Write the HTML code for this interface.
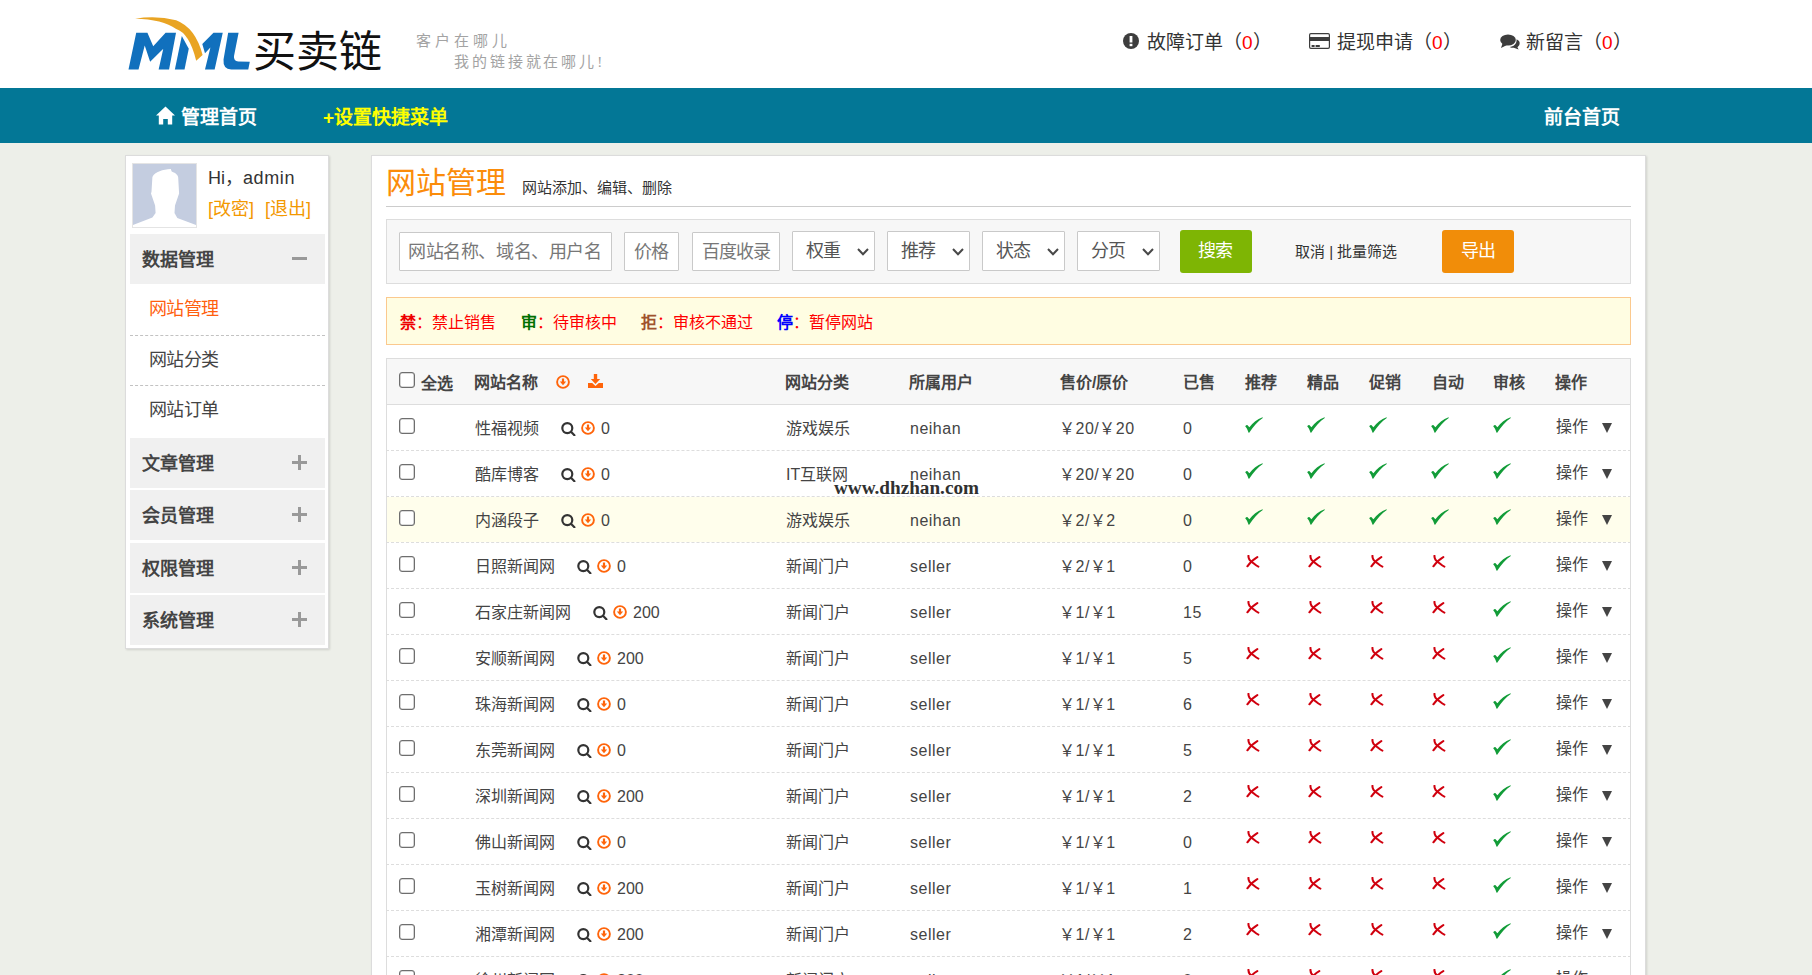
<!DOCTYPE html>
<html lang="zh-CN"><head><meta charset="utf-8"><title>网站管理</title>
<style>
*{box-sizing:border-box;margin:0;padding:0}
html,body{width:1812px;height:975px;overflow:hidden}
body{background:#edefe9;font-family:"Liberation Sans",sans-serif;color:#333;position:relative}
.a{position:absolute;white-space:nowrap}
#hdr{position:absolute;left:0;top:0;width:1812px;height:88px;background:#fff}
#nav{position:absolute;left:0;top:88px;width:1812px;height:55px;background:#037796}
.navt{font-size:19px;font-weight:bold;color:#fff;line-height:20px}
.hitem{font-size:19px;color:#333;line-height:20px}
.red{color:#f00}
#side{position:absolute;left:125px;top:155px;width:204px;height:494px;background:#fff;border:1px solid #dcdcdc;box-shadow:1px 1px 2px rgba(0,0,0,.12)}
.mh{position:absolute;left:4px;width:195px;height:50px;background:#f0f0f0}
.mh span{position:absolute;left:12px;top:16px;font-size:18px;font-weight:bold;color:#444;line-height:20px}
.mh i{position:absolute;left:162px;top:17px;width:15px;height:15px}
.mh i:before{content:"";position:absolute;left:0;top:6px;width:15px;height:3px;background:#999}
.mh i.p:after{content:"";position:absolute;left:6px;top:0;width:3px;height:15px;background:#999}
.mi{position:absolute;left:4px;width:195px;height:50px;border-bottom:1px dashed #c2c2c2}
.mi span{position:absolute;left:19px;top:14px;font-size:18px;letter-spacing:-0.7px;color:#444;line-height:20px}
#main{position:absolute;left:371px;top:155px;width:1275px;height:840px;background:#fff;border:1px solid #dcdcdc;box-shadow:1px 1px 2px rgba(0,0,0,.12)}
#srch{position:absolute;left:386px;top:219px;width:1245px;height:65px;background:#f7f7f7;border:1px solid #dddddd}
.inp{position:absolute;top:232px;height:39px;background:#fff;border:1px solid #c9c9c9;border-radius:1px;font-size:18px;letter-spacing:-1px;white-space:nowrap;color:#777;line-height:20px}
.inp span{position:absolute;top:9px}
.sel{position:absolute;top:231px;height:40px;width:83px;background:#fff;border:1px solid #c9c9c9;border-radius:1px;font-size:18px;letter-spacing:-1px;color:#555;line-height:20px;white-space:nowrap}
.sel span{position:absolute;left:13px;top:9px}
.sel svg{position:absolute;left:64px;top:16px}
.btn{position:absolute;top:230px;width:72px;height:43px;border-radius:3px;color:#fff;font-size:18px;letter-spacing:-1px;white-space:nowrap;line-height:20px}
.btn span{position:absolute;left:18px;top:11px}
#legend{position:absolute;left:386px;top:297px;width:1245px;height:48px;background:#fffde2;border:1px solid #fbc98e;font-size:16px;line-height:18px;color:#f00}
#legend span{position:absolute;top:16px}
#legend b{font-weight:bold}
.co{font-style:normal;display:inline-block;width:16px;padding-left:1px;font-family:"Liberation Sans",sans-serif}
#thead{position:absolute;left:386px;top:358px;width:1245px;height:47px;background:#f7f7f7;border:1px solid #dddddd;font-size:16px;font-weight:bold;color:#444;line-height:18px}
#thead span{position:absolute;top:15px}
.tr{position:absolute;left:386px;width:1245px;height:46px;border-left:1px solid #ddd;border-right:1px solid #ddd;border-bottom:1px dashed #ddd;font-size:16px;line-height:18px;color:#444}
.trbg{position:absolute;left:0;top:0;right:0;bottom:0}
.td{position:absolute;top:15px;white-space:nowrap}
.lat{letter-spacing:0.5px}
.cb{position:absolute;width:16px;height:16px;border:1px solid #6e6e6e;border-radius:3px;background:#fff;box-shadow:inset 0 0 0 0.3px #6e6e6e}
.ic{display:inline-block;margin-left:22px;vertical-align:-2px}
.ic2{display:inline-block;margin-left:5px;vertical-align:-1px}
.cnt{font-style:normal;margin-left:6px}
.mk{position:absolute}
.mk svg{display:block}
.tri{position:absolute;left:1215px;top:18px;width:0;height:0;border-left:5.5px solid transparent;border-right:5.5px solid transparent;border-top:10px solid #444}
#wm{position:absolute;left:834px;top:477px;font-family:"Liberation Serif",serif;font-weight:bold;font-size:19.2px;color:#303030;line-height:22px}

</style></head><body>
<div id="hdr"></div>
<svg class="a" style="left:120px;top:10px" width="140" height="70" viewBox="0 0 1812 906">
<path fill="#1170bd" d="M110,770 L210,295 L355,295 L430,470 L590,295 L725,295 L635,770 L500,770 L560,500 L390,670 L320,460 L240,770 Z"/>
<path fill="#1170bd" d="M710,770 L800,335 L890,500 L835,770 Z"/>
<path fill="#1170bd" d="M1065,440 L1210,295 L1330,295 L1225,770 L1100,770 L1170,485 L1100,560 Z"/>
<path fill="#1170bd" d="M1400,295 L1535,295 L1475,600 Q1470,665 1530,668 L1680,670 L1660,770 L1440,770 Q1330,765 1340,640 Z"/>
<path fill="#e9a423" stroke="#fff" stroke-width="22" paint-order="stroke" d="M195,113 Q470,70 727,132 Q980,230 1069,584 L986,656 Q900,300 727,245 Q550,120 195,113 Z"/>
</svg>
<div class="a" style="left:253px;top:29px;font-family:'Liberation Serif',serif;font-size:43px;line-height:48px;color:#111">买卖链</div>
<div class="a" style="left:416px;top:32px;font-family:'Liberation Serif',serif;font-size:15px;line-height:18px;color:#a3a3a3;letter-spacing:4px">客户在哪儿</div>
<div class="a" style="left:454px;top:53px;font-family:'Liberation Serif',serif;font-size:15px;line-height:18px;color:#a3a3a3;letter-spacing:2.9px">我的链接就在哪儿!</div>

<svg class="a" style="left:1123px;top:33px" width="16" height="16" viewBox="0 0 16 16"><circle cx="8" cy="8" r="8" fill="#3d3d3d"/><rect x="6.6" y="3" width="2.8" height="6.5" fill="#fff"/><rect x="6.6" y="10.8" width="2.8" height="2.4" fill="#fff"/></svg>
<div class="a hitem" style="left:1147px;top:33px">故障订单（<span class="red">0</span>）</div>
<svg class="a" style="left:1309px;top:33px" width="21" height="16" viewBox="0 0 21 16"><rect x="0.6" y="0.6" width="19.8" height="14.8" rx="1.3" fill="none" stroke="#3d3d3d" stroke-width="1.2"/><rect x="0.6" y="4" width="19.8" height="4" fill="#3d3d3d"/><rect x="2.6" y="12" width="3" height="2" fill="#3d3d3d"/><rect x="6.6" y="12" width="4.2" height="2" fill="#3d3d3d"/></svg>
<div class="a hitem" style="left:1337px;top:33px">提现申请（<span class="red">0</span>）</div>
<svg class="a" style="left:1500px;top:34px" width="20" height="16" viewBox="0 0 20 16"><ellipse cx="8" cy="6" rx="7.8" ry="5.6" fill="#3d3d3d"/><path d="M2.5,9.5 L1,14 L7,11 Z" fill="#3d3d3d"/><path d="M16.6,5.2 C19,6.2 20,8 19.6,10 C19.2,11.8 18,12.8 17.4,13.2 L18.6,15.6 L13.8,13.8 C12.4,13.9 10.9,13.6 9.6,12.9 C13.5,12.6 16.9,10 16.6,5.2 Z" fill="#3d3d3d"/></svg>
<div class="a hitem" style="left:1526px;top:33px">新留言（<span class="red">0</span>）</div>

<div id="nav"></div>
<svg class="a" style="left:156px;top:106px" width="19" height="19" viewBox="0 0 19 19"><path d="M9.5,0.5 L19,9.6 L16.2,9.6 L16.2,18.6 L11.8,18.6 L11.8,13 L7.2,13 L7.2,18.6 L2.8,18.6 L2.8,9.6 L0,9.6 Z" fill="#fff"/></svg>
<div class="a navt" style="left:181px;top:108px">管理首页</div>
<div class="a navt" style="left:323px;top:108px;color:#ffff00">+设置快捷菜单</div>
<div class="a navt" style="left:1544px;top:108px">前台首页</div>

<div id="side">
  <div style="position:absolute;left:6px;top:7px;width:65px;height:65px;border:1px solid #e4e4e4;background:#fff">
    <svg width="63" height="63" viewBox="0 0 63 63" style="display:block"><rect width="63" height="63" fill="#c4cde0"/><path fill="#fff" d="M37.8,5.1 L38.7,7.4 C43,9 45.4,11.5 45.2,13.8 L46.1,29.5 L42,41.5 L41.5,48.9 L44.3,54 L63,60.9 L63,63 L0,63 L0,60.9 L19.4,53.5 L22.6,48.9 L22.1,41.5 L18,29.5 L18.5,27.7 L19.4,12.9 C22,8 30,5.5 37.8,5.1 Z"/></svg>
  </div>
  <div class="a" style="left:82px;top:12px;font-size:18px;line-height:20px;color:#333">Hi<span style="letter-spacing:0">，</span><span style="letter-spacing:0.6px">admin</span></div>
  <div class="a" style="left:82px;top:43px;font-size:18px;line-height:20px;color:#f39800">[改密]<span style="margin-left:11px">[退出]</span></div>
  <div class="mh" style="top:78px"><span>数据管理</span><i></i></div>
  <div class="mi" style="top:128px;height:52px"><span style="color:#ff5f0f;top:15px">网站管理</span></div>
  <div class="mi" style="top:180px"><span>网站分类</span></div>
  <div class="mi" style="top:230px;border-bottom:none"><span>网站订单</span></div>
  <div class="mh" style="top:282px"><span>文章管理</span><i class="p"></i></div>
  <div class="mh" style="top:334px"><span>会员管理</span><i class="p"></i></div>
  <div class="mh" style="top:387px"><span>权限管理</span><i class="p"></i></div>
  <div class="mh" style="top:439px"><span>系统管理</span><i class="p"></i></div>
</div>

<div id="main"></div>
<div class="a" style="left:386px;top:165px;font-size:30px;line-height:36px;color:#fb8c0a">网站管理</div>
<div class="a" style="left:522px;top:179px;font-size:15px;line-height:18px;color:#333">网站添加、编辑、删除</div>
<div class="a" style="left:386px;top:206px;width:1245px;height:1px;background:#cccccc"></div>

<div id="srch"></div>
<div class="inp" style="left:399px;width:213px;letter-spacing:-0.4px"><span style="left:8px">网站名称、域名、用户名</span></div>
<div class="inp" style="left:624px;width:55px"><span style="left:9px">价格</span></div>
<div class="inp" style="left:692px;width:88px"><span style="left:9px">百度收录</span></div>
<div class="sel" style="left:792px"><span>权重</span><svg width="12" height="8" viewBox="0 0 12 8"><path d="M1,1 L6,6.2 L11,1" stroke="#484848" stroke-width="2" fill="none"/></svg></div>
<div class="sel" style="left:887px"><span>推荐</span><svg width="12" height="8" viewBox="0 0 12 8"><path d="M1,1 L6,6.2 L11,1" stroke="#484848" stroke-width="2" fill="none"/></svg></div>
<div class="sel" style="left:982px"><span>状态</span><svg width="12" height="8" viewBox="0 0 12 8"><path d="M1,1 L6,6.2 L11,1" stroke="#484848" stroke-width="2" fill="none"/></svg></div>
<div class="sel" style="left:1077px"><span>分页</span><svg width="12" height="8" viewBox="0 0 12 8"><path d="M1,1 L6,6.2 L11,1" stroke="#484848" stroke-width="2" fill="none"/></svg></div>
<div class="btn" style="left:1180px;background:#7eb504"><span>搜索</span></div>
<div class="a" style="left:1295px;top:243px;font-size:15px;line-height:18px;color:#333">取消 | 批量筛选</div>
<div class="btn" style="left:1442px;background:#f18d09"><span style="left:19px">导出</span></div>

<div id="legend">
<span style="left:13px"><b style="color:#e00">禁</b>：禁止销售</span>
<span style="left:134px"><b style="color:#007000">审</b>：待审核中</span>
<span style="left:254px"><b style="color:#a0522d">拒</b>：审核不通过</span>
<span style="left:390px"><b style="color:#00f">停</b>：暂停网站</span>
</div>

<div id="thead">
<i class="cb" style="left:12px;top:13px"></i>
<span style="left:34px;top:16px">全选</span>
<span style="left:87px">网站名称</span>
<svg style="position:absolute;left:169px;top:16px" width="14" height="14" viewBox="0 0 14 14"><circle cx="7" cy="7" r="5.9" stroke="#ff640a" stroke-width="1.9" fill="none"/><path d="M5.9,3.4 H8.1 V6.6 H10.2 L7,10.2 L3.8,6.6 H5.9 Z" fill="#ff640a"/></svg>
<svg style="position:absolute;left:201px;top:15px" width="15" height="14" viewBox="0 0 16 14" preserveAspectRatio="none"><path d="M6.2,0 H9.8 V5 H13 L8,10 L3,5 H6.2 Z" fill="#ff640a"/><path d="M0,9 H4.5 L8,12 L11.5,9 H16 V14 H0 Z" fill="#ff640a"/></svg>
<span style="left:398px">网站分类</span>
<span style="left:522px">所属用户</span>
<span style="left:673px">售价/原价</span>
<span style="left:796px">已售</span>
<span style="left:858px">推荐</span>
<span style="left:920px">精品</span>
<span style="left:982px">促销</span>
<span style="left:1045px">自动</span>
<span style="left:1106px">审核</span>
<span style="left:1168px">操作</span>
</div>
<div class="tr" style="top:405px"><div class="trbg"></div><i class="cb" style="left:12px;top:13px"></i><span class="td nm" style="left:88px">性福视频<b class="ic"><svg width="15" height="14" viewBox="0 0 15 14"><circle cx="6.3" cy="6.1" r="5" stroke="#333" stroke-width="2.2" fill="none"/><path d="M10,9.8 L13.4,13.2" stroke="#333" stroke-width="2.2" stroke-linecap="round"/></svg></b><b class="ic2"><svg width="14" height="14" viewBox="0 0 14 14"><circle cx="7" cy="7" r="5.9" stroke="#ff640a" stroke-width="1.9" fill="none"/><path d="M5.9,3.4 H8.1 V6.6 H10.2 L7,10.2 L3.8,6.6 H5.9 Z" fill="#ff640a"/></svg></b><em class="cnt">0</em></span><span class="td" style="left:399px">游戏娱乐</span><span class="td lat" style="left:523px">neihan</span><span class="td lat" style="left:672px">￥20/￥20</span><span class="td lat" style="left:796px">0</span><span class="mk" style="left:858px;top:12px"><svg class="ck" width="18" height="16" viewBox="0 0 18 16"><path d="M0.2,9.3 C0.9,8.4 1.6,8 2.3,8.1 L4.4,10.2 C8,5.6 12,2.1 17.6,0.2 L17.8,0.9 C12.8,4 8.4,9.2 4.2,15.8 L3.6,15.8 C2.6,12.8 1.5,10.6 0.2,9.3 Z" fill="#129c38"/></svg></span><span class="mk" style="left:920px;top:12px"><svg class="ck" width="18" height="16" viewBox="0 0 18 16"><path d="M0.2,9.3 C0.9,8.4 1.6,8 2.3,8.1 L4.4,10.2 C8,5.6 12,2.1 17.6,0.2 L17.8,0.9 C12.8,4 8.4,9.2 4.2,15.8 L3.6,15.8 C2.6,12.8 1.5,10.6 0.2,9.3 Z" fill="#129c38"/></svg></span><span class="mk" style="left:982px;top:12px"><svg class="ck" width="18" height="16" viewBox="0 0 18 16"><path d="M0.2,9.3 C0.9,8.4 1.6,8 2.3,8.1 L4.4,10.2 C8,5.6 12,2.1 17.6,0.2 L17.8,0.9 C12.8,4 8.4,9.2 4.2,15.8 L3.6,15.8 C2.6,12.8 1.5,10.6 0.2,9.3 Z" fill="#129c38"/></svg></span><span class="mk" style="left:1044px;top:12px"><svg class="ck" width="18" height="16" viewBox="0 0 18 16"><path d="M0.2,9.3 C0.9,8.4 1.6,8 2.3,8.1 L4.4,10.2 C8,5.6 12,2.1 17.6,0.2 L17.8,0.9 C12.8,4 8.4,9.2 4.2,15.8 L3.6,15.8 C2.6,12.8 1.5,10.6 0.2,9.3 Z" fill="#129c38"/></svg></span><span class="mk" style="left:1106px;top:12px"><svg class="ck" width="18" height="16" viewBox="0 0 18 16"><path d="M0.2,9.3 C0.9,8.4 1.6,8 2.3,8.1 L4.4,10.2 C8,5.6 12,2.1 17.6,0.2 L17.8,0.9 C12.8,4 8.4,9.2 4.2,15.8 L3.6,15.8 C2.6,12.8 1.5,10.6 0.2,9.3 Z" fill="#129c38"/></svg></span><span class="td" style="left:1169px;top:13px">操作</span><span class="tri"></span></div>
<div class="tr" style="top:451px"><div class="trbg"></div><i class="cb" style="left:12px;top:13px"></i><span class="td nm" style="left:88px">酷库博客<b class="ic"><svg width="15" height="14" viewBox="0 0 15 14"><circle cx="6.3" cy="6.1" r="5" stroke="#333" stroke-width="2.2" fill="none"/><path d="M10,9.8 L13.4,13.2" stroke="#333" stroke-width="2.2" stroke-linecap="round"/></svg></b><b class="ic2"><svg width="14" height="14" viewBox="0 0 14 14"><circle cx="7" cy="7" r="5.9" stroke="#ff640a" stroke-width="1.9" fill="none"/><path d="M5.9,3.4 H8.1 V6.6 H10.2 L7,10.2 L3.8,6.6 H5.9 Z" fill="#ff640a"/></svg></b><em class="cnt">0</em></span><span class="td" style="left:399px">IT互联网</span><span class="td lat" style="left:523px">neihan</span><span class="td lat" style="left:672px">￥20/￥20</span><span class="td lat" style="left:796px">0</span><span class="mk" style="left:858px;top:12px"><svg class="ck" width="18" height="16" viewBox="0 0 18 16"><path d="M0.2,9.3 C0.9,8.4 1.6,8 2.3,8.1 L4.4,10.2 C8,5.6 12,2.1 17.6,0.2 L17.8,0.9 C12.8,4 8.4,9.2 4.2,15.8 L3.6,15.8 C2.6,12.8 1.5,10.6 0.2,9.3 Z" fill="#129c38"/></svg></span><span class="mk" style="left:920px;top:12px"><svg class="ck" width="18" height="16" viewBox="0 0 18 16"><path d="M0.2,9.3 C0.9,8.4 1.6,8 2.3,8.1 L4.4,10.2 C8,5.6 12,2.1 17.6,0.2 L17.8,0.9 C12.8,4 8.4,9.2 4.2,15.8 L3.6,15.8 C2.6,12.8 1.5,10.6 0.2,9.3 Z" fill="#129c38"/></svg></span><span class="mk" style="left:982px;top:12px"><svg class="ck" width="18" height="16" viewBox="0 0 18 16"><path d="M0.2,9.3 C0.9,8.4 1.6,8 2.3,8.1 L4.4,10.2 C8,5.6 12,2.1 17.6,0.2 L17.8,0.9 C12.8,4 8.4,9.2 4.2,15.8 L3.6,15.8 C2.6,12.8 1.5,10.6 0.2,9.3 Z" fill="#129c38"/></svg></span><span class="mk" style="left:1044px;top:12px"><svg class="ck" width="18" height="16" viewBox="0 0 18 16"><path d="M0.2,9.3 C0.9,8.4 1.6,8 2.3,8.1 L4.4,10.2 C8,5.6 12,2.1 17.6,0.2 L17.8,0.9 C12.8,4 8.4,9.2 4.2,15.8 L3.6,15.8 C2.6,12.8 1.5,10.6 0.2,9.3 Z" fill="#129c38"/></svg></span><span class="mk" style="left:1106px;top:12px"><svg class="ck" width="18" height="16" viewBox="0 0 18 16"><path d="M0.2,9.3 C0.9,8.4 1.6,8 2.3,8.1 L4.4,10.2 C8,5.6 12,2.1 17.6,0.2 L17.8,0.9 C12.8,4 8.4,9.2 4.2,15.8 L3.6,15.8 C2.6,12.8 1.5,10.6 0.2,9.3 Z" fill="#129c38"/></svg></span><span class="td" style="left:1169px;top:13px">操作</span><span class="tri"></span></div>
<div class="tr" style="top:497px"><div class="trbg" style="background:#fffeec"></div><i class="cb" style="left:12px;top:13px"></i><span class="td nm" style="left:88px">内涵段子<b class="ic"><svg width="15" height="14" viewBox="0 0 15 14"><circle cx="6.3" cy="6.1" r="5" stroke="#333" stroke-width="2.2" fill="none"/><path d="M10,9.8 L13.4,13.2" stroke="#333" stroke-width="2.2" stroke-linecap="round"/></svg></b><b class="ic2"><svg width="14" height="14" viewBox="0 0 14 14"><circle cx="7" cy="7" r="5.9" stroke="#ff640a" stroke-width="1.9" fill="none"/><path d="M5.9,3.4 H8.1 V6.6 H10.2 L7,10.2 L3.8,6.6 H5.9 Z" fill="#ff640a"/></svg></b><em class="cnt">0</em></span><span class="td" style="left:399px">游戏娱乐</span><span class="td lat" style="left:523px">neihan</span><span class="td lat" style="left:672px">￥2/￥2</span><span class="td lat" style="left:796px">0</span><span class="mk" style="left:858px;top:12px"><svg class="ck" width="18" height="16" viewBox="0 0 18 16"><path d="M0.2,9.3 C0.9,8.4 1.6,8 2.3,8.1 L4.4,10.2 C8,5.6 12,2.1 17.6,0.2 L17.8,0.9 C12.8,4 8.4,9.2 4.2,15.8 L3.6,15.8 C2.6,12.8 1.5,10.6 0.2,9.3 Z" fill="#129c38"/></svg></span><span class="mk" style="left:920px;top:12px"><svg class="ck" width="18" height="16" viewBox="0 0 18 16"><path d="M0.2,9.3 C0.9,8.4 1.6,8 2.3,8.1 L4.4,10.2 C8,5.6 12,2.1 17.6,0.2 L17.8,0.9 C12.8,4 8.4,9.2 4.2,15.8 L3.6,15.8 C2.6,12.8 1.5,10.6 0.2,9.3 Z" fill="#129c38"/></svg></span><span class="mk" style="left:982px;top:12px"><svg class="ck" width="18" height="16" viewBox="0 0 18 16"><path d="M0.2,9.3 C0.9,8.4 1.6,8 2.3,8.1 L4.4,10.2 C8,5.6 12,2.1 17.6,0.2 L17.8,0.9 C12.8,4 8.4,9.2 4.2,15.8 L3.6,15.8 C2.6,12.8 1.5,10.6 0.2,9.3 Z" fill="#129c38"/></svg></span><span class="mk" style="left:1044px;top:12px"><svg class="ck" width="18" height="16" viewBox="0 0 18 16"><path d="M0.2,9.3 C0.9,8.4 1.6,8 2.3,8.1 L4.4,10.2 C8,5.6 12,2.1 17.6,0.2 L17.8,0.9 C12.8,4 8.4,9.2 4.2,15.8 L3.6,15.8 C2.6,12.8 1.5,10.6 0.2,9.3 Z" fill="#129c38"/></svg></span><span class="mk" style="left:1106px;top:12px"><svg class="ck" width="18" height="16" viewBox="0 0 18 16"><path d="M0.2,9.3 C0.9,8.4 1.6,8 2.3,8.1 L4.4,10.2 C8,5.6 12,2.1 17.6,0.2 L17.8,0.9 C12.8,4 8.4,9.2 4.2,15.8 L3.6,15.8 C2.6,12.8 1.5,10.6 0.2,9.3 Z" fill="#129c38"/></svg></span><span class="td" style="left:1169px;top:13px">操作</span><span class="tri"></span></div>
<div class="tr" style="top:543px"><div class="trbg"></div><i class="cb" style="left:12px;top:13px"></i><span class="td nm" style="left:88px">日照新闻网<b class="ic"><svg width="15" height="14" viewBox="0 0 15 14"><circle cx="6.3" cy="6.1" r="5" stroke="#333" stroke-width="2.2" fill="none"/><path d="M10,9.8 L13.4,13.2" stroke="#333" stroke-width="2.2" stroke-linecap="round"/></svg></b><b class="ic2"><svg width="14" height="14" viewBox="0 0 14 14"><circle cx="7" cy="7" r="5.9" stroke="#ff640a" stroke-width="1.9" fill="none"/><path d="M5.9,3.4 H8.1 V6.6 H10.2 L7,10.2 L3.8,6.6 H5.9 Z" fill="#ff640a"/></svg></b><em class="cnt">0</em></span><span class="td" style="left:399px">新闻门户</span><span class="td lat" style="left:523px">seller</span><span class="td lat" style="left:672px">￥2/￥1</span><span class="td lat" style="left:796px">0</span><span class="mk" style="left:859px;top:12px"><svg class="cx" width="15" height="14" viewBox="0 0 15 14"><g transform="translate(0.3,0.3) scale(0.9)"><path d="M2.4,0.6 C2.2,3.5 4.5,6.5 7,8 C9,9.6 11,11.6 13.4,12.6" stroke="#d0000e" stroke-width="2.3" fill="none" stroke-linecap="round"/><path d="M12.2,2 C8.5,4 4,8.5 1.2,12.2" stroke="#d0000e" stroke-width="2.3" fill="none" stroke-linecap="round"/></g></svg></span><span class="mk" style="left:921px;top:12px"><svg class="cx" width="15" height="14" viewBox="0 0 15 14"><g transform="translate(0.3,0.3) scale(0.9)"><path d="M2.4,0.6 C2.2,3.5 4.5,6.5 7,8 C9,9.6 11,11.6 13.4,12.6" stroke="#d0000e" stroke-width="2.3" fill="none" stroke-linecap="round"/><path d="M12.2,2 C8.5,4 4,8.5 1.2,12.2" stroke="#d0000e" stroke-width="2.3" fill="none" stroke-linecap="round"/></g></svg></span><span class="mk" style="left:983px;top:12px"><svg class="cx" width="15" height="14" viewBox="0 0 15 14"><g transform="translate(0.3,0.3) scale(0.9)"><path d="M2.4,0.6 C2.2,3.5 4.5,6.5 7,8 C9,9.6 11,11.6 13.4,12.6" stroke="#d0000e" stroke-width="2.3" fill="none" stroke-linecap="round"/><path d="M12.2,2 C8.5,4 4,8.5 1.2,12.2" stroke="#d0000e" stroke-width="2.3" fill="none" stroke-linecap="round"/></g></svg></span><span class="mk" style="left:1045px;top:12px"><svg class="cx" width="15" height="14" viewBox="0 0 15 14"><g transform="translate(0.3,0.3) scale(0.9)"><path d="M2.4,0.6 C2.2,3.5 4.5,6.5 7,8 C9,9.6 11,11.6 13.4,12.6" stroke="#d0000e" stroke-width="2.3" fill="none" stroke-linecap="round"/><path d="M12.2,2 C8.5,4 4,8.5 1.2,12.2" stroke="#d0000e" stroke-width="2.3" fill="none" stroke-linecap="round"/></g></svg></span><span class="mk" style="left:1106px;top:12px"><svg class="ck" width="18" height="16" viewBox="0 0 18 16"><path d="M0.2,9.3 C0.9,8.4 1.6,8 2.3,8.1 L4.4,10.2 C8,5.6 12,2.1 17.6,0.2 L17.8,0.9 C12.8,4 8.4,9.2 4.2,15.8 L3.6,15.8 C2.6,12.8 1.5,10.6 0.2,9.3 Z" fill="#129c38"/></svg></span><span class="td" style="left:1169px;top:13px">操作</span><span class="tri"></span></div>
<div class="tr" style="top:589px"><div class="trbg"></div><i class="cb" style="left:12px;top:13px"></i><span class="td nm" style="left:88px">石家庄新闻网<b class="ic"><svg width="15" height="14" viewBox="0 0 15 14"><circle cx="6.3" cy="6.1" r="5" stroke="#333" stroke-width="2.2" fill="none"/><path d="M10,9.8 L13.4,13.2" stroke="#333" stroke-width="2.2" stroke-linecap="round"/></svg></b><b class="ic2"><svg width="14" height="14" viewBox="0 0 14 14"><circle cx="7" cy="7" r="5.9" stroke="#ff640a" stroke-width="1.9" fill="none"/><path d="M5.9,3.4 H8.1 V6.6 H10.2 L7,10.2 L3.8,6.6 H5.9 Z" fill="#ff640a"/></svg></b><em class="cnt">200</em></span><span class="td" style="left:399px">新闻门户</span><span class="td lat" style="left:523px">seller</span><span class="td lat" style="left:672px">￥1/￥1</span><span class="td lat" style="left:796px">15</span><span class="mk" style="left:859px;top:12px"><svg class="cx" width="15" height="14" viewBox="0 0 15 14"><g transform="translate(0.3,0.3) scale(0.9)"><path d="M2.4,0.6 C2.2,3.5 4.5,6.5 7,8 C9,9.6 11,11.6 13.4,12.6" stroke="#d0000e" stroke-width="2.3" fill="none" stroke-linecap="round"/><path d="M12.2,2 C8.5,4 4,8.5 1.2,12.2" stroke="#d0000e" stroke-width="2.3" fill="none" stroke-linecap="round"/></g></svg></span><span class="mk" style="left:921px;top:12px"><svg class="cx" width="15" height="14" viewBox="0 0 15 14"><g transform="translate(0.3,0.3) scale(0.9)"><path d="M2.4,0.6 C2.2,3.5 4.5,6.5 7,8 C9,9.6 11,11.6 13.4,12.6" stroke="#d0000e" stroke-width="2.3" fill="none" stroke-linecap="round"/><path d="M12.2,2 C8.5,4 4,8.5 1.2,12.2" stroke="#d0000e" stroke-width="2.3" fill="none" stroke-linecap="round"/></g></svg></span><span class="mk" style="left:983px;top:12px"><svg class="cx" width="15" height="14" viewBox="0 0 15 14"><g transform="translate(0.3,0.3) scale(0.9)"><path d="M2.4,0.6 C2.2,3.5 4.5,6.5 7,8 C9,9.6 11,11.6 13.4,12.6" stroke="#d0000e" stroke-width="2.3" fill="none" stroke-linecap="round"/><path d="M12.2,2 C8.5,4 4,8.5 1.2,12.2" stroke="#d0000e" stroke-width="2.3" fill="none" stroke-linecap="round"/></g></svg></span><span class="mk" style="left:1045px;top:12px"><svg class="cx" width="15" height="14" viewBox="0 0 15 14"><g transform="translate(0.3,0.3) scale(0.9)"><path d="M2.4,0.6 C2.2,3.5 4.5,6.5 7,8 C9,9.6 11,11.6 13.4,12.6" stroke="#d0000e" stroke-width="2.3" fill="none" stroke-linecap="round"/><path d="M12.2,2 C8.5,4 4,8.5 1.2,12.2" stroke="#d0000e" stroke-width="2.3" fill="none" stroke-linecap="round"/></g></svg></span><span class="mk" style="left:1106px;top:12px"><svg class="ck" width="18" height="16" viewBox="0 0 18 16"><path d="M0.2,9.3 C0.9,8.4 1.6,8 2.3,8.1 L4.4,10.2 C8,5.6 12,2.1 17.6,0.2 L17.8,0.9 C12.8,4 8.4,9.2 4.2,15.8 L3.6,15.8 C2.6,12.8 1.5,10.6 0.2,9.3 Z" fill="#129c38"/></svg></span><span class="td" style="left:1169px;top:13px">操作</span><span class="tri"></span></div>
<div class="tr" style="top:635px"><div class="trbg"></div><i class="cb" style="left:12px;top:13px"></i><span class="td nm" style="left:88px">安顺新闻网<b class="ic"><svg width="15" height="14" viewBox="0 0 15 14"><circle cx="6.3" cy="6.1" r="5" stroke="#333" stroke-width="2.2" fill="none"/><path d="M10,9.8 L13.4,13.2" stroke="#333" stroke-width="2.2" stroke-linecap="round"/></svg></b><b class="ic2"><svg width="14" height="14" viewBox="0 0 14 14"><circle cx="7" cy="7" r="5.9" stroke="#ff640a" stroke-width="1.9" fill="none"/><path d="M5.9,3.4 H8.1 V6.6 H10.2 L7,10.2 L3.8,6.6 H5.9 Z" fill="#ff640a"/></svg></b><em class="cnt">200</em></span><span class="td" style="left:399px">新闻门户</span><span class="td lat" style="left:523px">seller</span><span class="td lat" style="left:672px">￥1/￥1</span><span class="td lat" style="left:796px">5</span><span class="mk" style="left:859px;top:12px"><svg class="cx" width="15" height="14" viewBox="0 0 15 14"><g transform="translate(0.3,0.3) scale(0.9)"><path d="M2.4,0.6 C2.2,3.5 4.5,6.5 7,8 C9,9.6 11,11.6 13.4,12.6" stroke="#d0000e" stroke-width="2.3" fill="none" stroke-linecap="round"/><path d="M12.2,2 C8.5,4 4,8.5 1.2,12.2" stroke="#d0000e" stroke-width="2.3" fill="none" stroke-linecap="round"/></g></svg></span><span class="mk" style="left:921px;top:12px"><svg class="cx" width="15" height="14" viewBox="0 0 15 14"><g transform="translate(0.3,0.3) scale(0.9)"><path d="M2.4,0.6 C2.2,3.5 4.5,6.5 7,8 C9,9.6 11,11.6 13.4,12.6" stroke="#d0000e" stroke-width="2.3" fill="none" stroke-linecap="round"/><path d="M12.2,2 C8.5,4 4,8.5 1.2,12.2" stroke="#d0000e" stroke-width="2.3" fill="none" stroke-linecap="round"/></g></svg></span><span class="mk" style="left:983px;top:12px"><svg class="cx" width="15" height="14" viewBox="0 0 15 14"><g transform="translate(0.3,0.3) scale(0.9)"><path d="M2.4,0.6 C2.2,3.5 4.5,6.5 7,8 C9,9.6 11,11.6 13.4,12.6" stroke="#d0000e" stroke-width="2.3" fill="none" stroke-linecap="round"/><path d="M12.2,2 C8.5,4 4,8.5 1.2,12.2" stroke="#d0000e" stroke-width="2.3" fill="none" stroke-linecap="round"/></g></svg></span><span class="mk" style="left:1045px;top:12px"><svg class="cx" width="15" height="14" viewBox="0 0 15 14"><g transform="translate(0.3,0.3) scale(0.9)"><path d="M2.4,0.6 C2.2,3.5 4.5,6.5 7,8 C9,9.6 11,11.6 13.4,12.6" stroke="#d0000e" stroke-width="2.3" fill="none" stroke-linecap="round"/><path d="M12.2,2 C8.5,4 4,8.5 1.2,12.2" stroke="#d0000e" stroke-width="2.3" fill="none" stroke-linecap="round"/></g></svg></span><span class="mk" style="left:1106px;top:12px"><svg class="ck" width="18" height="16" viewBox="0 0 18 16"><path d="M0.2,9.3 C0.9,8.4 1.6,8 2.3,8.1 L4.4,10.2 C8,5.6 12,2.1 17.6,0.2 L17.8,0.9 C12.8,4 8.4,9.2 4.2,15.8 L3.6,15.8 C2.6,12.8 1.5,10.6 0.2,9.3 Z" fill="#129c38"/></svg></span><span class="td" style="left:1169px;top:13px">操作</span><span class="tri"></span></div>
<div class="tr" style="top:681px"><div class="trbg"></div><i class="cb" style="left:12px;top:13px"></i><span class="td nm" style="left:88px">珠海新闻网<b class="ic"><svg width="15" height="14" viewBox="0 0 15 14"><circle cx="6.3" cy="6.1" r="5" stroke="#333" stroke-width="2.2" fill="none"/><path d="M10,9.8 L13.4,13.2" stroke="#333" stroke-width="2.2" stroke-linecap="round"/></svg></b><b class="ic2"><svg width="14" height="14" viewBox="0 0 14 14"><circle cx="7" cy="7" r="5.9" stroke="#ff640a" stroke-width="1.9" fill="none"/><path d="M5.9,3.4 H8.1 V6.6 H10.2 L7,10.2 L3.8,6.6 H5.9 Z" fill="#ff640a"/></svg></b><em class="cnt">0</em></span><span class="td" style="left:399px">新闻门户</span><span class="td lat" style="left:523px">seller</span><span class="td lat" style="left:672px">￥1/￥1</span><span class="td lat" style="left:796px">6</span><span class="mk" style="left:859px;top:12px"><svg class="cx" width="15" height="14" viewBox="0 0 15 14"><g transform="translate(0.3,0.3) scale(0.9)"><path d="M2.4,0.6 C2.2,3.5 4.5,6.5 7,8 C9,9.6 11,11.6 13.4,12.6" stroke="#d0000e" stroke-width="2.3" fill="none" stroke-linecap="round"/><path d="M12.2,2 C8.5,4 4,8.5 1.2,12.2" stroke="#d0000e" stroke-width="2.3" fill="none" stroke-linecap="round"/></g></svg></span><span class="mk" style="left:921px;top:12px"><svg class="cx" width="15" height="14" viewBox="0 0 15 14"><g transform="translate(0.3,0.3) scale(0.9)"><path d="M2.4,0.6 C2.2,3.5 4.5,6.5 7,8 C9,9.6 11,11.6 13.4,12.6" stroke="#d0000e" stroke-width="2.3" fill="none" stroke-linecap="round"/><path d="M12.2,2 C8.5,4 4,8.5 1.2,12.2" stroke="#d0000e" stroke-width="2.3" fill="none" stroke-linecap="round"/></g></svg></span><span class="mk" style="left:983px;top:12px"><svg class="cx" width="15" height="14" viewBox="0 0 15 14"><g transform="translate(0.3,0.3) scale(0.9)"><path d="M2.4,0.6 C2.2,3.5 4.5,6.5 7,8 C9,9.6 11,11.6 13.4,12.6" stroke="#d0000e" stroke-width="2.3" fill="none" stroke-linecap="round"/><path d="M12.2,2 C8.5,4 4,8.5 1.2,12.2" stroke="#d0000e" stroke-width="2.3" fill="none" stroke-linecap="round"/></g></svg></span><span class="mk" style="left:1045px;top:12px"><svg class="cx" width="15" height="14" viewBox="0 0 15 14"><g transform="translate(0.3,0.3) scale(0.9)"><path d="M2.4,0.6 C2.2,3.5 4.5,6.5 7,8 C9,9.6 11,11.6 13.4,12.6" stroke="#d0000e" stroke-width="2.3" fill="none" stroke-linecap="round"/><path d="M12.2,2 C8.5,4 4,8.5 1.2,12.2" stroke="#d0000e" stroke-width="2.3" fill="none" stroke-linecap="round"/></g></svg></span><span class="mk" style="left:1106px;top:12px"><svg class="ck" width="18" height="16" viewBox="0 0 18 16"><path d="M0.2,9.3 C0.9,8.4 1.6,8 2.3,8.1 L4.4,10.2 C8,5.6 12,2.1 17.6,0.2 L17.8,0.9 C12.8,4 8.4,9.2 4.2,15.8 L3.6,15.8 C2.6,12.8 1.5,10.6 0.2,9.3 Z" fill="#129c38"/></svg></span><span class="td" style="left:1169px;top:13px">操作</span><span class="tri"></span></div>
<div class="tr" style="top:727px"><div class="trbg"></div><i class="cb" style="left:12px;top:13px"></i><span class="td nm" style="left:88px">东莞新闻网<b class="ic"><svg width="15" height="14" viewBox="0 0 15 14"><circle cx="6.3" cy="6.1" r="5" stroke="#333" stroke-width="2.2" fill="none"/><path d="M10,9.8 L13.4,13.2" stroke="#333" stroke-width="2.2" stroke-linecap="round"/></svg></b><b class="ic2"><svg width="14" height="14" viewBox="0 0 14 14"><circle cx="7" cy="7" r="5.9" stroke="#ff640a" stroke-width="1.9" fill="none"/><path d="M5.9,3.4 H8.1 V6.6 H10.2 L7,10.2 L3.8,6.6 H5.9 Z" fill="#ff640a"/></svg></b><em class="cnt">0</em></span><span class="td" style="left:399px">新闻门户</span><span class="td lat" style="left:523px">seller</span><span class="td lat" style="left:672px">￥1/￥1</span><span class="td lat" style="left:796px">5</span><span class="mk" style="left:859px;top:12px"><svg class="cx" width="15" height="14" viewBox="0 0 15 14"><g transform="translate(0.3,0.3) scale(0.9)"><path d="M2.4,0.6 C2.2,3.5 4.5,6.5 7,8 C9,9.6 11,11.6 13.4,12.6" stroke="#d0000e" stroke-width="2.3" fill="none" stroke-linecap="round"/><path d="M12.2,2 C8.5,4 4,8.5 1.2,12.2" stroke="#d0000e" stroke-width="2.3" fill="none" stroke-linecap="round"/></g></svg></span><span class="mk" style="left:921px;top:12px"><svg class="cx" width="15" height="14" viewBox="0 0 15 14"><g transform="translate(0.3,0.3) scale(0.9)"><path d="M2.4,0.6 C2.2,3.5 4.5,6.5 7,8 C9,9.6 11,11.6 13.4,12.6" stroke="#d0000e" stroke-width="2.3" fill="none" stroke-linecap="round"/><path d="M12.2,2 C8.5,4 4,8.5 1.2,12.2" stroke="#d0000e" stroke-width="2.3" fill="none" stroke-linecap="round"/></g></svg></span><span class="mk" style="left:983px;top:12px"><svg class="cx" width="15" height="14" viewBox="0 0 15 14"><g transform="translate(0.3,0.3) scale(0.9)"><path d="M2.4,0.6 C2.2,3.5 4.5,6.5 7,8 C9,9.6 11,11.6 13.4,12.6" stroke="#d0000e" stroke-width="2.3" fill="none" stroke-linecap="round"/><path d="M12.2,2 C8.5,4 4,8.5 1.2,12.2" stroke="#d0000e" stroke-width="2.3" fill="none" stroke-linecap="round"/></g></svg></span><span class="mk" style="left:1045px;top:12px"><svg class="cx" width="15" height="14" viewBox="0 0 15 14"><g transform="translate(0.3,0.3) scale(0.9)"><path d="M2.4,0.6 C2.2,3.5 4.5,6.5 7,8 C9,9.6 11,11.6 13.4,12.6" stroke="#d0000e" stroke-width="2.3" fill="none" stroke-linecap="round"/><path d="M12.2,2 C8.5,4 4,8.5 1.2,12.2" stroke="#d0000e" stroke-width="2.3" fill="none" stroke-linecap="round"/></g></svg></span><span class="mk" style="left:1106px;top:12px"><svg class="ck" width="18" height="16" viewBox="0 0 18 16"><path d="M0.2,9.3 C0.9,8.4 1.6,8 2.3,8.1 L4.4,10.2 C8,5.6 12,2.1 17.6,0.2 L17.8,0.9 C12.8,4 8.4,9.2 4.2,15.8 L3.6,15.8 C2.6,12.8 1.5,10.6 0.2,9.3 Z" fill="#129c38"/></svg></span><span class="td" style="left:1169px;top:13px">操作</span><span class="tri"></span></div>
<div class="tr" style="top:773px"><div class="trbg"></div><i class="cb" style="left:12px;top:13px"></i><span class="td nm" style="left:88px">深圳新闻网<b class="ic"><svg width="15" height="14" viewBox="0 0 15 14"><circle cx="6.3" cy="6.1" r="5" stroke="#333" stroke-width="2.2" fill="none"/><path d="M10,9.8 L13.4,13.2" stroke="#333" stroke-width="2.2" stroke-linecap="round"/></svg></b><b class="ic2"><svg width="14" height="14" viewBox="0 0 14 14"><circle cx="7" cy="7" r="5.9" stroke="#ff640a" stroke-width="1.9" fill="none"/><path d="M5.9,3.4 H8.1 V6.6 H10.2 L7,10.2 L3.8,6.6 H5.9 Z" fill="#ff640a"/></svg></b><em class="cnt">200</em></span><span class="td" style="left:399px">新闻门户</span><span class="td lat" style="left:523px">seller</span><span class="td lat" style="left:672px">￥1/￥1</span><span class="td lat" style="left:796px">2</span><span class="mk" style="left:859px;top:12px"><svg class="cx" width="15" height="14" viewBox="0 0 15 14"><g transform="translate(0.3,0.3) scale(0.9)"><path d="M2.4,0.6 C2.2,3.5 4.5,6.5 7,8 C9,9.6 11,11.6 13.4,12.6" stroke="#d0000e" stroke-width="2.3" fill="none" stroke-linecap="round"/><path d="M12.2,2 C8.5,4 4,8.5 1.2,12.2" stroke="#d0000e" stroke-width="2.3" fill="none" stroke-linecap="round"/></g></svg></span><span class="mk" style="left:921px;top:12px"><svg class="cx" width="15" height="14" viewBox="0 0 15 14"><g transform="translate(0.3,0.3) scale(0.9)"><path d="M2.4,0.6 C2.2,3.5 4.5,6.5 7,8 C9,9.6 11,11.6 13.4,12.6" stroke="#d0000e" stroke-width="2.3" fill="none" stroke-linecap="round"/><path d="M12.2,2 C8.5,4 4,8.5 1.2,12.2" stroke="#d0000e" stroke-width="2.3" fill="none" stroke-linecap="round"/></g></svg></span><span class="mk" style="left:983px;top:12px"><svg class="cx" width="15" height="14" viewBox="0 0 15 14"><g transform="translate(0.3,0.3) scale(0.9)"><path d="M2.4,0.6 C2.2,3.5 4.5,6.5 7,8 C9,9.6 11,11.6 13.4,12.6" stroke="#d0000e" stroke-width="2.3" fill="none" stroke-linecap="round"/><path d="M12.2,2 C8.5,4 4,8.5 1.2,12.2" stroke="#d0000e" stroke-width="2.3" fill="none" stroke-linecap="round"/></g></svg></span><span class="mk" style="left:1045px;top:12px"><svg class="cx" width="15" height="14" viewBox="0 0 15 14"><g transform="translate(0.3,0.3) scale(0.9)"><path d="M2.4,0.6 C2.2,3.5 4.5,6.5 7,8 C9,9.6 11,11.6 13.4,12.6" stroke="#d0000e" stroke-width="2.3" fill="none" stroke-linecap="round"/><path d="M12.2,2 C8.5,4 4,8.5 1.2,12.2" stroke="#d0000e" stroke-width="2.3" fill="none" stroke-linecap="round"/></g></svg></span><span class="mk" style="left:1106px;top:12px"><svg class="ck" width="18" height="16" viewBox="0 0 18 16"><path d="M0.2,9.3 C0.9,8.4 1.6,8 2.3,8.1 L4.4,10.2 C8,5.6 12,2.1 17.6,0.2 L17.8,0.9 C12.8,4 8.4,9.2 4.2,15.8 L3.6,15.8 C2.6,12.8 1.5,10.6 0.2,9.3 Z" fill="#129c38"/></svg></span><span class="td" style="left:1169px;top:13px">操作</span><span class="tri"></span></div>
<div class="tr" style="top:819px"><div class="trbg"></div><i class="cb" style="left:12px;top:13px"></i><span class="td nm" style="left:88px">佛山新闻网<b class="ic"><svg width="15" height="14" viewBox="0 0 15 14"><circle cx="6.3" cy="6.1" r="5" stroke="#333" stroke-width="2.2" fill="none"/><path d="M10,9.8 L13.4,13.2" stroke="#333" stroke-width="2.2" stroke-linecap="round"/></svg></b><b class="ic2"><svg width="14" height="14" viewBox="0 0 14 14"><circle cx="7" cy="7" r="5.9" stroke="#ff640a" stroke-width="1.9" fill="none"/><path d="M5.9,3.4 H8.1 V6.6 H10.2 L7,10.2 L3.8,6.6 H5.9 Z" fill="#ff640a"/></svg></b><em class="cnt">0</em></span><span class="td" style="left:399px">新闻门户</span><span class="td lat" style="left:523px">seller</span><span class="td lat" style="left:672px">￥1/￥1</span><span class="td lat" style="left:796px">0</span><span class="mk" style="left:859px;top:12px"><svg class="cx" width="15" height="14" viewBox="0 0 15 14"><g transform="translate(0.3,0.3) scale(0.9)"><path d="M2.4,0.6 C2.2,3.5 4.5,6.5 7,8 C9,9.6 11,11.6 13.4,12.6" stroke="#d0000e" stroke-width="2.3" fill="none" stroke-linecap="round"/><path d="M12.2,2 C8.5,4 4,8.5 1.2,12.2" stroke="#d0000e" stroke-width="2.3" fill="none" stroke-linecap="round"/></g></svg></span><span class="mk" style="left:921px;top:12px"><svg class="cx" width="15" height="14" viewBox="0 0 15 14"><g transform="translate(0.3,0.3) scale(0.9)"><path d="M2.4,0.6 C2.2,3.5 4.5,6.5 7,8 C9,9.6 11,11.6 13.4,12.6" stroke="#d0000e" stroke-width="2.3" fill="none" stroke-linecap="round"/><path d="M12.2,2 C8.5,4 4,8.5 1.2,12.2" stroke="#d0000e" stroke-width="2.3" fill="none" stroke-linecap="round"/></g></svg></span><span class="mk" style="left:983px;top:12px"><svg class="cx" width="15" height="14" viewBox="0 0 15 14"><g transform="translate(0.3,0.3) scale(0.9)"><path d="M2.4,0.6 C2.2,3.5 4.5,6.5 7,8 C9,9.6 11,11.6 13.4,12.6" stroke="#d0000e" stroke-width="2.3" fill="none" stroke-linecap="round"/><path d="M12.2,2 C8.5,4 4,8.5 1.2,12.2" stroke="#d0000e" stroke-width="2.3" fill="none" stroke-linecap="round"/></g></svg></span><span class="mk" style="left:1045px;top:12px"><svg class="cx" width="15" height="14" viewBox="0 0 15 14"><g transform="translate(0.3,0.3) scale(0.9)"><path d="M2.4,0.6 C2.2,3.5 4.5,6.5 7,8 C9,9.6 11,11.6 13.4,12.6" stroke="#d0000e" stroke-width="2.3" fill="none" stroke-linecap="round"/><path d="M12.2,2 C8.5,4 4,8.5 1.2,12.2" stroke="#d0000e" stroke-width="2.3" fill="none" stroke-linecap="round"/></g></svg></span><span class="mk" style="left:1106px;top:12px"><svg class="ck" width="18" height="16" viewBox="0 0 18 16"><path d="M0.2,9.3 C0.9,8.4 1.6,8 2.3,8.1 L4.4,10.2 C8,5.6 12,2.1 17.6,0.2 L17.8,0.9 C12.8,4 8.4,9.2 4.2,15.8 L3.6,15.8 C2.6,12.8 1.5,10.6 0.2,9.3 Z" fill="#129c38"/></svg></span><span class="td" style="left:1169px;top:13px">操作</span><span class="tri"></span></div>
<div class="tr" style="top:865px"><div class="trbg"></div><i class="cb" style="left:12px;top:13px"></i><span class="td nm" style="left:88px">玉树新闻网<b class="ic"><svg width="15" height="14" viewBox="0 0 15 14"><circle cx="6.3" cy="6.1" r="5" stroke="#333" stroke-width="2.2" fill="none"/><path d="M10,9.8 L13.4,13.2" stroke="#333" stroke-width="2.2" stroke-linecap="round"/></svg></b><b class="ic2"><svg width="14" height="14" viewBox="0 0 14 14"><circle cx="7" cy="7" r="5.9" stroke="#ff640a" stroke-width="1.9" fill="none"/><path d="M5.9,3.4 H8.1 V6.6 H10.2 L7,10.2 L3.8,6.6 H5.9 Z" fill="#ff640a"/></svg></b><em class="cnt">200</em></span><span class="td" style="left:399px">新闻门户</span><span class="td lat" style="left:523px">seller</span><span class="td lat" style="left:672px">￥1/￥1</span><span class="td lat" style="left:796px">1</span><span class="mk" style="left:859px;top:12px"><svg class="cx" width="15" height="14" viewBox="0 0 15 14"><g transform="translate(0.3,0.3) scale(0.9)"><path d="M2.4,0.6 C2.2,3.5 4.5,6.5 7,8 C9,9.6 11,11.6 13.4,12.6" stroke="#d0000e" stroke-width="2.3" fill="none" stroke-linecap="round"/><path d="M12.2,2 C8.5,4 4,8.5 1.2,12.2" stroke="#d0000e" stroke-width="2.3" fill="none" stroke-linecap="round"/></g></svg></span><span class="mk" style="left:921px;top:12px"><svg class="cx" width="15" height="14" viewBox="0 0 15 14"><g transform="translate(0.3,0.3) scale(0.9)"><path d="M2.4,0.6 C2.2,3.5 4.5,6.5 7,8 C9,9.6 11,11.6 13.4,12.6" stroke="#d0000e" stroke-width="2.3" fill="none" stroke-linecap="round"/><path d="M12.2,2 C8.5,4 4,8.5 1.2,12.2" stroke="#d0000e" stroke-width="2.3" fill="none" stroke-linecap="round"/></g></svg></span><span class="mk" style="left:983px;top:12px"><svg class="cx" width="15" height="14" viewBox="0 0 15 14"><g transform="translate(0.3,0.3) scale(0.9)"><path d="M2.4,0.6 C2.2,3.5 4.5,6.5 7,8 C9,9.6 11,11.6 13.4,12.6" stroke="#d0000e" stroke-width="2.3" fill="none" stroke-linecap="round"/><path d="M12.2,2 C8.5,4 4,8.5 1.2,12.2" stroke="#d0000e" stroke-width="2.3" fill="none" stroke-linecap="round"/></g></svg></span><span class="mk" style="left:1045px;top:12px"><svg class="cx" width="15" height="14" viewBox="0 0 15 14"><g transform="translate(0.3,0.3) scale(0.9)"><path d="M2.4,0.6 C2.2,3.5 4.5,6.5 7,8 C9,9.6 11,11.6 13.4,12.6" stroke="#d0000e" stroke-width="2.3" fill="none" stroke-linecap="round"/><path d="M12.2,2 C8.5,4 4,8.5 1.2,12.2" stroke="#d0000e" stroke-width="2.3" fill="none" stroke-linecap="round"/></g></svg></span><span class="mk" style="left:1106px;top:12px"><svg class="ck" width="18" height="16" viewBox="0 0 18 16"><path d="M0.2,9.3 C0.9,8.4 1.6,8 2.3,8.1 L4.4,10.2 C8,5.6 12,2.1 17.6,0.2 L17.8,0.9 C12.8,4 8.4,9.2 4.2,15.8 L3.6,15.8 C2.6,12.8 1.5,10.6 0.2,9.3 Z" fill="#129c38"/></svg></span><span class="td" style="left:1169px;top:13px">操作</span><span class="tri"></span></div>
<div class="tr" style="top:911px"><div class="trbg"></div><i class="cb" style="left:12px;top:13px"></i><span class="td nm" style="left:88px">湘潭新闻网<b class="ic"><svg width="15" height="14" viewBox="0 0 15 14"><circle cx="6.3" cy="6.1" r="5" stroke="#333" stroke-width="2.2" fill="none"/><path d="M10,9.8 L13.4,13.2" stroke="#333" stroke-width="2.2" stroke-linecap="round"/></svg></b><b class="ic2"><svg width="14" height="14" viewBox="0 0 14 14"><circle cx="7" cy="7" r="5.9" stroke="#ff640a" stroke-width="1.9" fill="none"/><path d="M5.9,3.4 H8.1 V6.6 H10.2 L7,10.2 L3.8,6.6 H5.9 Z" fill="#ff640a"/></svg></b><em class="cnt">200</em></span><span class="td" style="left:399px">新闻门户</span><span class="td lat" style="left:523px">seller</span><span class="td lat" style="left:672px">￥1/￥1</span><span class="td lat" style="left:796px">2</span><span class="mk" style="left:859px;top:12px"><svg class="cx" width="15" height="14" viewBox="0 0 15 14"><g transform="translate(0.3,0.3) scale(0.9)"><path d="M2.4,0.6 C2.2,3.5 4.5,6.5 7,8 C9,9.6 11,11.6 13.4,12.6" stroke="#d0000e" stroke-width="2.3" fill="none" stroke-linecap="round"/><path d="M12.2,2 C8.5,4 4,8.5 1.2,12.2" stroke="#d0000e" stroke-width="2.3" fill="none" stroke-linecap="round"/></g></svg></span><span class="mk" style="left:921px;top:12px"><svg class="cx" width="15" height="14" viewBox="0 0 15 14"><g transform="translate(0.3,0.3) scale(0.9)"><path d="M2.4,0.6 C2.2,3.5 4.5,6.5 7,8 C9,9.6 11,11.6 13.4,12.6" stroke="#d0000e" stroke-width="2.3" fill="none" stroke-linecap="round"/><path d="M12.2,2 C8.5,4 4,8.5 1.2,12.2" stroke="#d0000e" stroke-width="2.3" fill="none" stroke-linecap="round"/></g></svg></span><span class="mk" style="left:983px;top:12px"><svg class="cx" width="15" height="14" viewBox="0 0 15 14"><g transform="translate(0.3,0.3) scale(0.9)"><path d="M2.4,0.6 C2.2,3.5 4.5,6.5 7,8 C9,9.6 11,11.6 13.4,12.6" stroke="#d0000e" stroke-width="2.3" fill="none" stroke-linecap="round"/><path d="M12.2,2 C8.5,4 4,8.5 1.2,12.2" stroke="#d0000e" stroke-width="2.3" fill="none" stroke-linecap="round"/></g></svg></span><span class="mk" style="left:1045px;top:12px"><svg class="cx" width="15" height="14" viewBox="0 0 15 14"><g transform="translate(0.3,0.3) scale(0.9)"><path d="M2.4,0.6 C2.2,3.5 4.5,6.5 7,8 C9,9.6 11,11.6 13.4,12.6" stroke="#d0000e" stroke-width="2.3" fill="none" stroke-linecap="round"/><path d="M12.2,2 C8.5,4 4,8.5 1.2,12.2" stroke="#d0000e" stroke-width="2.3" fill="none" stroke-linecap="round"/></g></svg></span><span class="mk" style="left:1106px;top:12px"><svg class="ck" width="18" height="16" viewBox="0 0 18 16"><path d="M0.2,9.3 C0.9,8.4 1.6,8 2.3,8.1 L4.4,10.2 C8,5.6 12,2.1 17.6,0.2 L17.8,0.9 C12.8,4 8.4,9.2 4.2,15.8 L3.6,15.8 C2.6,12.8 1.5,10.6 0.2,9.3 Z" fill="#129c38"/></svg></span><span class="td" style="left:1169px;top:13px">操作</span><span class="tri"></span></div>
<div class="tr" style="top:957px"><div class="trbg"></div><i class="cb" style="left:12px;top:13px"></i><span class="td nm" style="left:88px">徐州新闻网<b class="ic"><svg width="15" height="14" viewBox="0 0 15 14"><circle cx="6.3" cy="6.1" r="5" stroke="#333" stroke-width="2.2" fill="none"/><path d="M10,9.8 L13.4,13.2" stroke="#333" stroke-width="2.2" stroke-linecap="round"/></svg></b><b class="ic2"><svg width="14" height="14" viewBox="0 0 14 14"><circle cx="7" cy="7" r="5.9" stroke="#ff640a" stroke-width="1.9" fill="none"/><path d="M5.9,3.4 H8.1 V6.6 H10.2 L7,10.2 L3.8,6.6 H5.9 Z" fill="#ff640a"/></svg></b><em class="cnt">200</em></span><span class="td" style="left:399px">新闻门户</span><span class="td lat" style="left:523px">seller</span><span class="td lat" style="left:672px">￥1/￥1</span><span class="td lat" style="left:796px">0</span><span class="mk" style="left:859px;top:12px"><svg class="cx" width="15" height="14" viewBox="0 0 15 14"><g transform="translate(0.3,0.3) scale(0.9)"><path d="M2.4,0.6 C2.2,3.5 4.5,6.5 7,8 C9,9.6 11,11.6 13.4,12.6" stroke="#d0000e" stroke-width="2.3" fill="none" stroke-linecap="round"/><path d="M12.2,2 C8.5,4 4,8.5 1.2,12.2" stroke="#d0000e" stroke-width="2.3" fill="none" stroke-linecap="round"/></g></svg></span><span class="mk" style="left:921px;top:12px"><svg class="cx" width="15" height="14" viewBox="0 0 15 14"><g transform="translate(0.3,0.3) scale(0.9)"><path d="M2.4,0.6 C2.2,3.5 4.5,6.5 7,8 C9,9.6 11,11.6 13.4,12.6" stroke="#d0000e" stroke-width="2.3" fill="none" stroke-linecap="round"/><path d="M12.2,2 C8.5,4 4,8.5 1.2,12.2" stroke="#d0000e" stroke-width="2.3" fill="none" stroke-linecap="round"/></g></svg></span><span class="mk" style="left:983px;top:12px"><svg class="cx" width="15" height="14" viewBox="0 0 15 14"><g transform="translate(0.3,0.3) scale(0.9)"><path d="M2.4,0.6 C2.2,3.5 4.5,6.5 7,8 C9,9.6 11,11.6 13.4,12.6" stroke="#d0000e" stroke-width="2.3" fill="none" stroke-linecap="round"/><path d="M12.2,2 C8.5,4 4,8.5 1.2,12.2" stroke="#d0000e" stroke-width="2.3" fill="none" stroke-linecap="round"/></g></svg></span><span class="mk" style="left:1045px;top:12px"><svg class="cx" width="15" height="14" viewBox="0 0 15 14"><g transform="translate(0.3,0.3) scale(0.9)"><path d="M2.4,0.6 C2.2,3.5 4.5,6.5 7,8 C9,9.6 11,11.6 13.4,12.6" stroke="#d0000e" stroke-width="2.3" fill="none" stroke-linecap="round"/><path d="M12.2,2 C8.5,4 4,8.5 1.2,12.2" stroke="#d0000e" stroke-width="2.3" fill="none" stroke-linecap="round"/></g></svg></span><span class="mk" style="left:1106px;top:12px"><svg class="ck" width="18" height="16" viewBox="0 0 18 16"><path d="M0.2,9.3 C0.9,8.4 1.6,8 2.3,8.1 L4.4,10.2 C8,5.6 12,2.1 17.6,0.2 L17.8,0.9 C12.8,4 8.4,9.2 4.2,15.8 L3.6,15.8 C2.6,12.8 1.5,10.6 0.2,9.3 Z" fill="#129c38"/></svg></span><span class="td" style="left:1169px;top:13px">操作</span><span class="tri"></span></div>
<div id="wm">www.dhzhan.com</div>

</body></html>
